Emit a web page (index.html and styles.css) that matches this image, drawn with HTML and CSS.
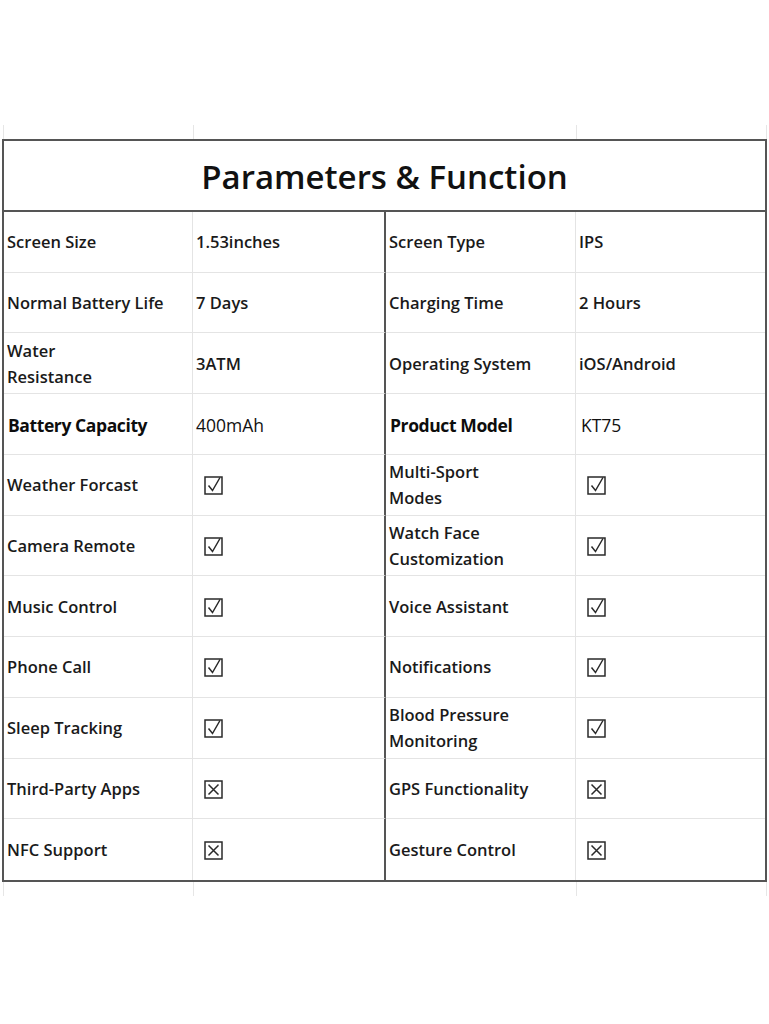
FILE: index.html
```html
<!DOCTYPE html>
<html>
<head>
<meta charset="utf-8">
<link rel="stylesheet" href="styles.css">
</head>
<body>
<div class="sheet">
  <div class="ticks"><span></span><span></span><span></span><span></span></div>
  <div class="table">
    <div class="title">Parameters &amp; Function</div>
    <div class="grid">
      <div class="c c1">Screen Size</div><div class="c c2">1.53inches</div><div class="c c3">Screen Type</div><div class="c c4">IPS</div>
      <div class="c c1">Normal Battery Life</div><div class="c c2">7 Days</div><div class="c c3">Charging Time</div><div class="c c4">2 Hours</div>
      <div class="c c1">Water<br>Resistance</div><div class="c c2">3ATM</div><div class="c c3">Operating System</div><div class="c c4">iOS/Android</div>
      <div class="c c1 strong">Battery Capacity</div><div class="c c2 plain">400mAh</div><div class="c c3 strong">Product Model</div><div class="c c4 plain pad">KT75</div>
      <div class="c c1">Weather Forcast</div><div class="c c2"><svg class="box" viewBox="0 0 20 20"><rect x="1" y="2" width="17" height="17"/><path d="M4.5 10.5 L8.5 15.5 L16 2.5"/></svg></div><div class="c c3">Multi-Sport<br>Modes</div><div class="c c4"><svg class="box" viewBox="0 0 20 20"><rect x="1" y="2" width="17" height="17"/><path d="M4.5 10.5 L8.5 15.5 L16 2.5"/></svg></div>
      <div class="c c1">Camera Remote</div><div class="c c2"><svg class="box" viewBox="0 0 20 20"><rect x="1" y="2" width="17" height="17"/><path d="M4.5 10.5 L8.5 15.5 L16 2.5"/></svg></div><div class="c c3">Watch Face<br>Customization</div><div class="c c4"><svg class="box" viewBox="0 0 20 20"><rect x="1" y="2" width="17" height="17"/><path d="M4.5 10.5 L8.5 15.5 L16 2.5"/></svg></div>
      <div class="c c1">Music Control</div><div class="c c2"><svg class="box" viewBox="0 0 20 20"><rect x="1" y="2" width="17" height="17"/><path d="M4.5 10.5 L8.5 15.5 L16 2.5"/></svg></div><div class="c c3">Voice Assistant</div><div class="c c4"><svg class="box" viewBox="0 0 20 20"><rect x="1" y="2" width="17" height="17"/><path d="M4.5 10.5 L8.5 15.5 L16 2.5"/></svg></div>
      <div class="c c1">Phone Call</div><div class="c c2"><svg class="box" viewBox="0 0 20 20"><rect x="1" y="2" width="17" height="17"/><path d="M4.5 10.5 L8.5 15.5 L16 2.5"/></svg></div><div class="c c3">Notifications</div><div class="c c4"><svg class="box" viewBox="0 0 20 20"><rect x="1" y="2" width="17" height="17"/><path d="M4.5 10.5 L8.5 15.5 L16 2.5"/></svg></div>
      <div class="c c1">Sleep Tracking</div><div class="c c2"><svg class="box" viewBox="0 0 20 20"><rect x="1" y="2" width="17" height="17"/><path d="M4.5 10.5 L8.5 15.5 L16 2.5"/></svg></div><div class="c c3">Blood Pressure<br>Monitoring</div><div class="c c4"><svg class="box" viewBox="0 0 20 20"><rect x="1" y="2" width="17" height="17"/><path d="M4.5 10.5 L8.5 15.5 L16 2.5"/></svg></div>
      <div class="c c1">Third-Party Apps</div><div class="c c2"><svg class="box" viewBox="0 0 20 20"><rect x="1" y="2" width="17" height="17"/><path d="M4.5 5.5 L14.5 15.5 M14.5 5.5 L4.5 15.5"/></svg></div><div class="c c3">GPS Functionality</div><div class="c c4"><svg class="box" viewBox="0 0 20 20"><rect x="1" y="2" width="17" height="17"/><path d="M4.5 5.5 L14.5 15.5 M14.5 5.5 L4.5 15.5"/></svg></div>
      <div class="c c1 last">NFC Support</div><div class="c c2 last"><svg class="box" viewBox="0 0 20 20"><rect x="1" y="2" width="17" height="17"/><path d="M4.5 5.5 L14.5 15.5 M14.5 5.5 L4.5 15.5"/></svg></div><div class="c c3 last">Gesture Control</div><div class="c c4 last"><svg class="box" viewBox="0 0 20 20"><rect x="1" y="2" width="17" height="17"/><path d="M4.5 5.5 L14.5 15.5 M14.5 5.5 L4.5 15.5"/></svg></div>
    </div>
  </div>
  <div class="ticks"><span></span><span></span><span></span><span></span></div>
</div>
</body>
</html>
```
FILE: styles.css
```css
html, body {
  margin: 0;
  padding: 0;
  background: #ffffff;
}
.sheet {
  width: 769px;
  padding-top: 125px;
  font-family: "Open Sans", "Noto Sans", sans-serif;
  color: #151515;
}
.ticks {
  display: grid;
  grid-template-columns: 190px 383px 190px 1px;
  margin-left: 3px;
  height: 14px;
}
.ticks span {
  border-left: 1px solid #e6e6e6;
}
.table {
  margin-left: 2px;
  width: 765px;
  box-sizing: border-box;
  border: 2px solid #555555;
}
.title {
  height: 71px;
  box-sizing: border-box;
  border-bottom: 2px solid #555555;
  display: flex;
  align-items: center;
  justify-content: center;
  font-size: 33px;
  font-weight: 600;
  letter-spacing: 0;
  color: #111111;
  padding-top: 2px;
}
.grid {
  display: grid;
  grid-template-columns: 189px 193px 190px 189px;
  grid-template-rows: repeat(11, 1fr);
  height: 668px;
}
.c {
  display: flex;
  align-items: center;
  box-sizing: border-box;
  padding-left: 3px;
  padding-top: 1px;
  border-bottom: 1px solid #e4e4e4;
  border-right: 1px solid #e4e4e4;
  font-size: 16.5px;
  font-weight: 600;
  letter-spacing: 0;
  line-height: 26px;
  color: #1a1a1a;
}
.c2 {
  border-right: 2px solid #555555;
}
.c4 {
  border-right: none;
}
.last {
  border-bottom: none;
}
.strong {
  font-size: 17.5px;
  font-weight: 700;
  letter-spacing: -0.4px;
  color: #0d0d0d;
  padding-left: 4px;
}
.plain {
  font-weight: 400;
  font-size: 17.5px;
  color: #111111;
}
.pad {
  padding-left: 5px;
}
.box {
  width: 20px;
  height: 20px;
  margin-left: 8px;
  fill: none;
  stroke: #2a2a2a;
  stroke-width: 1.5;
}
```
